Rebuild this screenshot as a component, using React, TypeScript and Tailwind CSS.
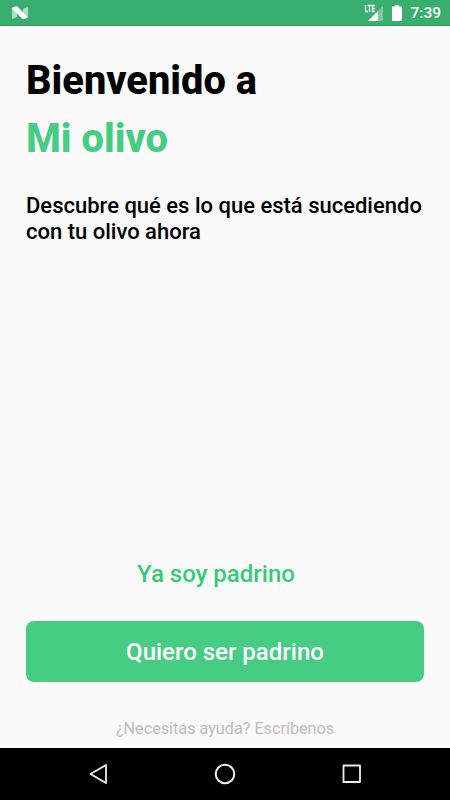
import React from 'react';

function StatusBar() {
  return (
    <header className="flex h-[26px] shrink-0 items-center border-b border-[#2f9d61] bg-[#3aae6e] pl-3 pr-[9px] text-white">
      <svg className="mt-px" width="16" height="14" viewBox="0 0 16 14" fill="#fff">
        <path d="M0 2l5-1.500V11l-5 2zM11 3l5-2v10.500L11 13z" fillOpacity="0.6" />
        <path d="M0.500 1.500Q3 0 5.500 0.500L15.500 11Q14 13.500 10.500 13L0.500 3z" />
      </svg>
      <div className="ml-auto flex items-center">
        <svg width="20" height="18" viewBox="0 0 20 18">
          <path d="M19 2v15H4z" fill="#fff" fillOpacity="0.35" />
          <path d="M14 7v10H4z" fill="#fff" />
          <path d="M1.500 1v7M1 7.500h3M3.500 1.500h4M5.500 1v7M11 1.500H8.500v6H11M8.500 4.500H11" fill="none" stroke="#fff" strokeWidth="1.300" />
        </svg>
        <svg className="ml-2 mt-px" width="10" height="16" viewBox="0 0 10 16">
          <path d="M3 0h4v1.500h3V16H0V1.500h3z" fill="#fff" />
        </svg>
        <span className="ml-2 mt-[2px] text-[15.500px] font-medium leading-none">7:39</span>
      </div>
    </header>
  );
}

function NavBar() {
  return (
    <nav className="flex h-[52px] shrink-0 items-center justify-between bg-black px-[87px]">
      <svg width="22" height="22" viewBox="0 0 22 22" fill="none" stroke="#eee" strokeWidth="1.800" strokeLinejoin="round">
        <path d="M19 2v18L3.500 11z" />
      </svg>
      <svg width="22" height="22" viewBox="0 0 22 22" fill="none" stroke="#eee" strokeWidth="2">
        <circle cx="11" cy="11" r="9.300" />
      </svg>
      <svg width="22" height="22" viewBox="0 0 22 22" fill="none" stroke="#eee" strokeWidth="1.800" strokeLinejoin="round">
        <rect x="2.500" y="2.500" width="16.500" height="16.500" />
      </svg>
    </nav>
  );
}

export default function App() {
  return (
    <div className="flex h-screen w-full flex-col bg-[#fafafa] font-['Roboto',sans-serif]">
      <StatusBar />

      <main className="flex flex-1 flex-col px-[26px] pt-[26px]">
        {/* Welcome text */}
        <h1 className="text-[39.800px] font-extrabold leading-[58px] text-black">
          Bienvenido a
          <span className="block text-[#46cd83]">Mi olivo</span>
        </h1>
        <p className="mt-[25px] text-[22px] font-medium leading-[26px] text-black">
          Descubre qué es lo que está sucediendo con tu olivo ahora
        </p>

        {/* Actions */}
        <div className="mt-auto flex flex-col items-center">
          <button className="mr-[18px] h-[30px] text-[24px] font-medium leading-[30px] text-[#36cb79]">
            Ya soy padrino
          </button>
          <button className="mt-8 h-[61px] w-full rounded-lg bg-[#46cd83] text-[24px] font-medium text-white">
            Quiero ser padrino
          </button>
          <a className="mb-[9px] mt-[37px] text-[16.200px] leading-5 text-[#bdbdbd]">
            ¿Necesitas ayuda? Escríbenos
          </a>
        </div>
      </main>

      <NavBar />
    </div>
  );
}
